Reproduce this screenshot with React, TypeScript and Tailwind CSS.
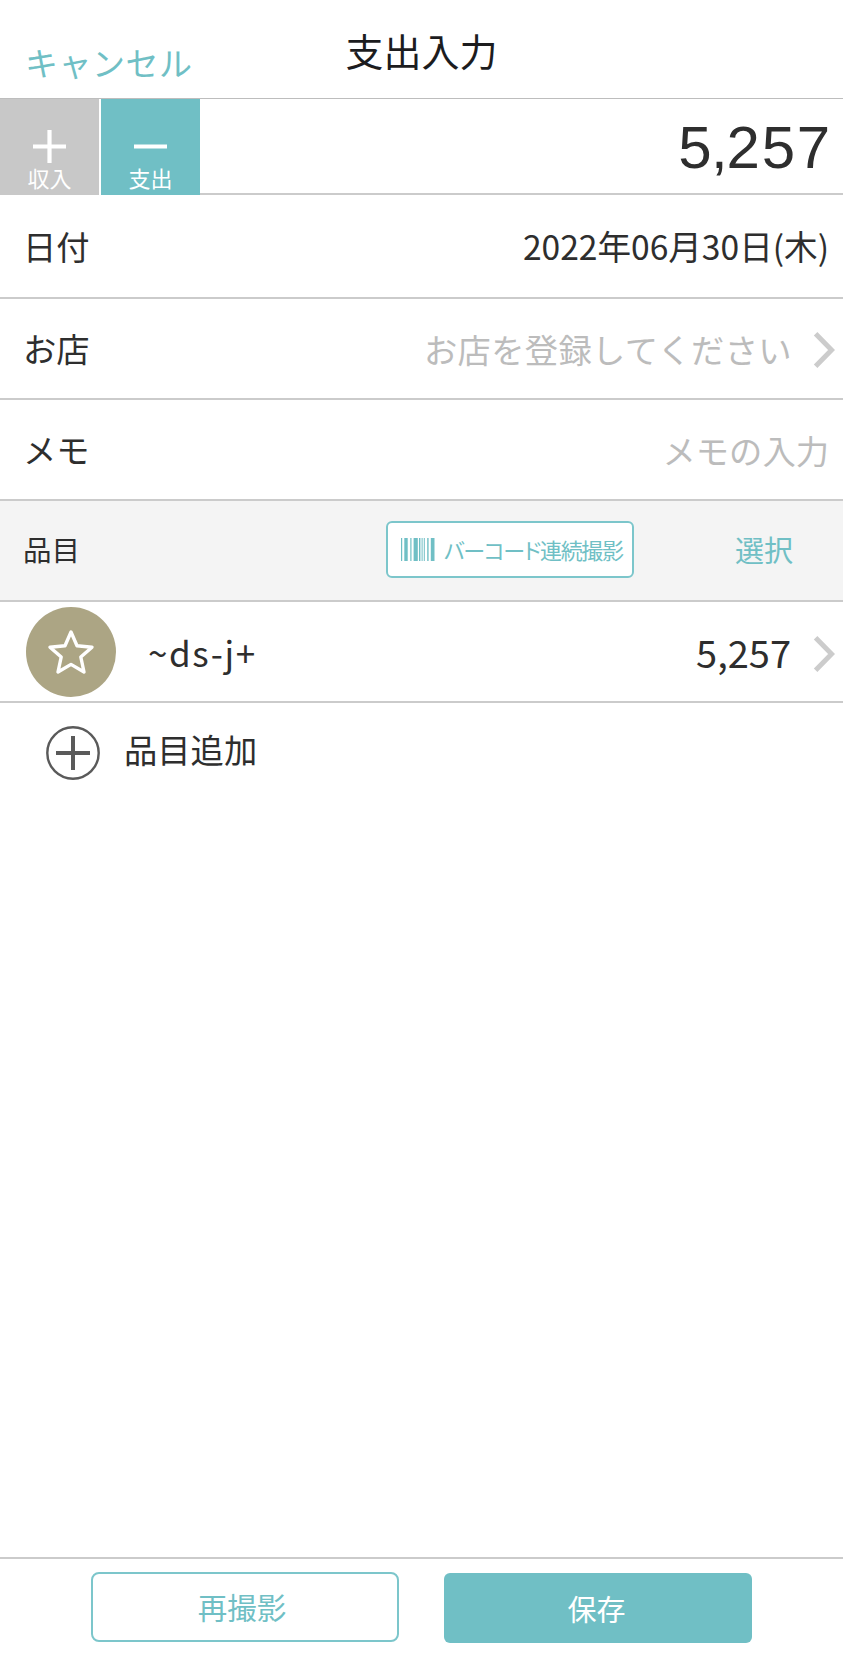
import type { ReactNode } from "react";

const BARS = [
  { x: 0, w: 1.2 },
  { x: 3.3, w: 3.4 },
  { x: 9.3, w: 1.2 },
  { x: 12.6, w: 4.2 },
  { x: 18, w: 1.4 },
  { x: 20.6, w: 1 },
  { x: 22.8, w: 1 },
  { x: 26.2, w: 1.4 },
  { x: 29.8, w: 3.7 },
];

function Chevron() {
  return (
    <svg width="22" height="36" viewBox="0 0 22 36" fill="none" className="shrink-0">
      <path d="M2.6 1.8L18.6 18L2.6 34.2" stroke="#cccccc" strokeWidth="5" />
    </svg>
  );
}

function BarcodeIcon() {
  return (
    <svg width="34" height="23" viewBox="0 0 34 23" fill="#70bfc5" className="shrink-0">
      {BARS.map((b) => (
        <rect key={b.x} x={b.x} y="0" width={b.w} height="23" />
      ))}
    </svg>
  );
}

function FormRow({ label, children }: { label: string; children: ReactNode }) {
  return (
    <div className="flex h-[101px] items-center justify-between border-b-2 border-[#cbcbcb] pl-[23px]">
      <span className="pb-px">{label}</span>
      {children}
    </div>
  );
}

export default function App() {
  return (
    <div className="flex h-[1679px] w-[843px] flex-col bg-white font-['Noto_Sans_CJK_JP',sans-serif] text-[33.3px] leading-none text-[#2e2e2e]">
      {/* Header */}
      <header className="grid h-[99px] grid-cols-[1fr_auto_1fr] border-b border-[#bdbdbd]">
        <button className="self-start justify-self-start pt-[46px] pl-[25px] text-[33px] leading-[33px] tracking-[0.5px] text-[#70bfc5]">
          キャンセル
        </button>
        <h1 className="pt-[31px] text-[38px] leading-[38px] text-[#1c1c1e]">支出入力</h1>
      </header>

      {/* Income / expense tabs */}
      <div className="flex h-24 justify-between">
        <div className="flex gap-0.5">
          <button className="flex w-[99px] flex-col items-center bg-[#c8c8c8] pt-[31px] text-[22px] leading-[22px] text-white">
            <svg width="33" height="33" viewBox="0 0 33 33" stroke="#fff" strokeWidth="4.2" className="shrink-0">
              <path d="M0 16.5H33M16.5 0V33" />
            </svg>
            <span className="mt-[3px]">収入</span>
          </button>
          <button className="flex w-[99px] flex-col items-center bg-[#70bfc5] pt-[31px] text-[22px] leading-[22px] text-white">
            <svg width="33" height="33" viewBox="0 0 33 33" stroke="#fff" strokeWidth="4.2" className="shrink-0">
              <path d="M0 16.5H33" />
            </svg>
            <span className="mt-[3px]">支出</span>
          </button>
        </div>
        <div className="flex flex-1 justify-end border-b-2 border-[#cbcbcb] pt-[19px] pr-[11px] font-['Liberation_Sans',sans-serif] text-[60px] leading-[60px] tracking-[1.8px]">
          <span>
            <span className="tracking-[-0.5px]">5</span>
            <span className="tracking-[-1.2px]">,</span>257
          </span>
        </div>
      </div>

      <div className="flex h-[104px] items-center justify-between border-b-2 border-[#cbcbcb] pr-[14px] pl-[23px]">
        <span>日付</span>
        <span className="text-[33.6px]">2022年06月30日(木)</span>
      </div>
      <FormRow label="お店">
        <div className="flex items-center gap-[21px] pr-[8px] text-[#bcbcbc]">
          <span className="tracking-[0.35px]">お店を登録してください</span>
          <span className="pt-[3px]">
            <Chevron />
          </span>
        </div>
      </FormRow>
      <FormRow label="メモ">
        <span className="pr-[14px] text-[#bcbcbc]">メモの入力</span>
      </FormRow>

      {/* Items */}
      <div className="flex h-[101px] items-center border-b-2 border-[#cbcbcb] bg-[#f4f4f4] pl-[23px] text-[29px]">
        <span className="w-[363px] pb-0.5 text-[28.5px]">品目</span>
        <button className="mb-0.5 flex h-[57px] w-[248px] items-center gap-[9px] rounded-md border-2 border-[#7cc6cb] bg-white pl-[13px] text-[#70bfc5]">
          <BarcodeIcon />
          <span className="pb-0.5 text-[22px] whitespace-nowrap tracking-[-1.3px] [font-feature-settings:'palt']">
            バーコード連続撮影
          </span>
        </button>
        <button className="ml-[101px] pb-0.5 text-[#70bfc5]">選択</button>
      </div>

      <div className="flex h-[101px] items-center border-b-2 border-[#cbcbcb] pr-[8px] pl-[26px]">
        <div className="flex size-[90px] items-center justify-center rounded-full bg-[#aca584]">
          <svg width="50" height="50" viewBox="0 0 50 50" fill="none" stroke="#fff" strokeWidth="3.4" strokeLinejoin="round">
            <path d="M25 5L31 18.7L46 20.2L34.8 30L38 45L25 37.4L12 45L15.2 30L4 20.2L19 18.7Z" />
          </svg>
        </div>
        <span className="ml-8 flex-1 text-[35px] tracking-[1.6px]">~ds-j+</span>
        <span className="text-[38px]">5,257</span>
        <span className="ml-[22px] pt-1">
          <Chevron />
        </span>
      </div>

      <button className="flex h-[100px] items-center pl-[46px]">
        <svg width="54" height="54" viewBox="0 0 54 54" fill="none" stroke="#5a5a5a">
          <circle cx="27" cy="27" r="25.7" strokeWidth="2.4" />
          <path d="M10 27H44M27 10V44" strokeWidth="4" />
        </svg>
        <span className="ml-[24px] pb-2">品目追加</span>
      </button>

      {/* Footer actions */}
      <footer className="mt-auto flex h-[122px] gap-[45px] border-t-2 border-[#cbcbcb] pt-[13px] pl-[91px] text-[29.5px]">
        <button className="h-[70px] w-[308px] rounded-lg border-2 border-[#7cc6cb] pr-1.5 text-[#70bfc5]">再撮影</button>
        <button className="mt-px h-[70px] w-[308px] rounded-md bg-[#70bfc5] pr-[3px] text-[29px] text-white">保存</button>
      </footer>
    </div>
  );
}
